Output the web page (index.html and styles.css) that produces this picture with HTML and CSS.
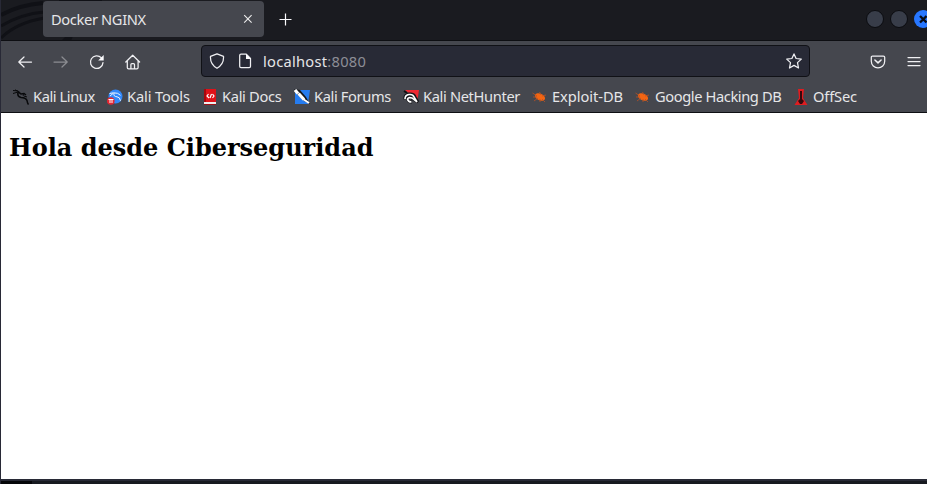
FILE: index.html
```html
<!DOCTYPE html>
<html lang="es">
<head>
<meta charset="utf-8">
<title>Docker NGINX</title>
<link rel="stylesheet" href="styles.css">
</head>
<body>
<div class="window">
  <header class="tabbar">
    <svg class="pattern" width="130" height="40" viewBox="0 0 130 40"><g fill="none" stroke="#101116" stroke-width="4"><path d="M0 15Q18 5 42 3"/><path d="M0 26Q20 14 43 12" stroke-width="3"/><path d="M0 38Q15 23 43 18" stroke-width="3"/><path d="M60 41l5-5h7l-2 5z" fill="#101116" stroke="none"/><path d="M58 0h43" stroke-width="2"/></g></svg>
    <div class="tab"><span>Docker NGINX</span><svg width="10" height="10" viewBox="0 0 10 10"><path d="M1.2 1.2l7.4 7.4M8.6 1.2L1.2 8.6" stroke="#eee" stroke-width="1.1"/></svg></div>
    <svg class="plus" width="13" height="13" viewBox="0 0 13 13"><path d="M6.5.5v12M.5 6.5h12" stroke="#fbfbfe" stroke-width="1.2"/></svg>
    <div class="controls"><i></i><i></i><i class="close"><svg width="18" height="18" viewBox="0 0 18 18"><path d="M6 6l6.500 6.500M12.500 6L6 12.500" stroke="#080d18" stroke-width="2.300"/></svg></i></div>
  </header>
  <nav class="toolbar">
    <div class="buttons">
      <svg width="16" height="16" viewBox="0 0 16 16"><path d="M14.500 8H2M7 3L1.800 8 7 13"/></svg>
      <svg class="dim" width="16" height="16" viewBox="0 0 16 16"><path d="M1 8h13M9 3l5.200 5L9 13"/></svg>
      <svg width="16" height="16" viewBox="0 0 16 16"><path d="M14 8.600A6.300 6.300 0 1 1 12.300 3.800"/><path d="M14.700 1v5.500H9.200z" fill="#fbfbfe" stroke="none"/></svg>
      <svg width="16" height="16" viewBox="0 0 16 16"><path d="M.8 8L7.700 1.200 14.600 8M2.300 6.800v6.700q0 1.300 1.300 1.300h8.200q1.300 0 1.300-1.300V6.800M5.900 14.500v-4q0-1 1-1h1.600q1 0 1 1v4"/></svg>
    </div>
    <div class="url">
      <svg width="16" height="16" viewBox="0 0 16 16"><path d="M8 .8l6.500 2.500q.6 7.800-6.500 12Q.9 11.100 1.500 3.300z"/></svg>
      <svg width="16" height="16" viewBox="0 0 16 16"><path d="M4 1.200h5.300L13.500 5.400v7.900q0 1.300-1.300 1.300H4q-1.300 0-1.300-1.300V2.500Q2.700 1.200 4 1.200z"/><path d="M9 1v5h5z" fill="#fbfbfe" stroke="none"/></svg>
      <span class="address">localhost<b>:8080</b></span>
      <svg class="star" width="16" height="16" viewBox="0 0 16 16"><path d="M8 .9l2.100 4.600 5.200.6-3.800 3.500 1 5.400L8 12.400 3.500 15l1-5.400L.7 6.100l5.200-.6z"/></svg>
    </div>
    <svg class="pocket" width="16" height="16" viewBox="0 0 16 16"><path d="M2.600 2h10.800q1.300 0 1.300 1.300v3.900a6.700 6.700 0 0 1-13.400 0V3.300Q1.300 2 2.600 2z"/><path d="M4.900 6L8 8.900 11.100 6" stroke-width="1.500"/></svg>
    <svg class="menu" width="14" height="12" viewBox="0 0 14 12"><path d="M1 1.500h12M1 5.500h12M1 9.500h12"/></svg>
  </nav>
  <nav class="bookmarks">
    <a class="w1"><svg width="16" height="16" viewBox="0 0 16 16"><g fill="none" stroke="#08090b" stroke-width="1"><path d="M0 1.500l5 .5 2.500 2M0 4.500l5-1.500M2 .8l3 1.500"/><path d="M5 3l3 2 3-.5 2 1.500M5 3.500Q4 7.500 8 8.500q5 .2 6 3 .2 2 1.500 4" stroke-width="1.500"/><path d="M11 4.500Q9 7 12 7.300l2 .7"/></g></svg><span>Kali Linux</span></a>
    <a class="w2"><svg width="16" height="16" viewBox="0 0 16 16"><circle cx="8.500" cy="7.500" r="7" fill="#3188fa"/><path d="M2.500 4.500l4-.7 4 .5 3 2M3 7l3-2.500M7 4q-1 3.500 3 3.800 3 .2 3.500 4" fill="none" stroke="#edf5ff" stroke-width="1"/><circle cx="3.800" cy="12" r="3.800" fill="#e32632"/><path d="M1.500 10.500h5M3 10.500V14m2-3.500V14" stroke="#fff"/></svg><span>Kali Tools</span></a>
    <a class="w3"><svg width="16" height="16" viewBox="0 0 16 16"><path d="M2 0h12v13H2z" fill="#df1219"/><path d="M2 0h2v13H2z" fill="#a9070d"/><path d="M2 13h12v2H2z" fill="#eee"/><path d="M2 15h12v1H2z" fill="#991117"/><path d="M6.500 5L5 7l2 2M10.500 5L12 7l-1.500 2M9.500 5L8 9" fill="none" stroke="#fff" stroke-width="1.200"/></svg><span>Kali Docs</span></a>
    <a class="w4"><svg width="16" height="16" viewBox="0 0 16 16"><path d="M1 1h15l-2 14H1z" fill="#257cf0"/><path d="M0 0l6 1 6 7 4 7-6-3-7-7z" fill="#15181d"/><path d="M1 1l3 3.500M4.500 4.500l5.500 6" stroke="#fff" stroke-width="3.200"/><path d="M9 10l6 4" stroke="#fff" stroke-width="2"/></svg><span>Kali Forums</span></a>
    <a class="w5"><svg width="16" height="16" viewBox="0 0 16 16"><path d="M2 1h14l-2 13L8 6z" fill="#ed2932"/><path d="M1 2l3 2" stroke="#111" stroke-width="2"/><path d="M2 10q-1-3.500 4-5 5-.5 6 3l3 5-5-3q-3-3-5 0-.5 3 4 3" stroke="#15161a" stroke-width="3" fill="#15161a"/><path d="M2 10q0-4 4-4.500 4-.5 5 2.500l3 5-5-4q-4-1-4.500 1 .5 3 4 3" stroke="#fff" stroke-width="1.600" fill="none"/></svg><span>Kali NetHunter</span></a>
    <a class="w6"><svg width="16" height="16" viewBox="0 0 16 16"><ellipse cx="8" cy="8" rx="5.400" ry="3.300" transform="rotate(25 8 8)" fill="#f36512"/><path d="M5 7L.5 4M5 8L1 8M6 9l-4 3M9 6L7.500 3M10 7l4-1M8 10v3M10 10l3 3" stroke="#b95024" stroke-width=".8"/></svg><span>Exploit-DB</span></a>
    <a class="w7"><svg width="16" height="16" viewBox="0 0 16 16"><ellipse cx="8" cy="8" rx="5.400" ry="3.300" transform="rotate(25 8 8)" fill="#f36512"/><path d="M5 7L.5 4M5 8L1 8M6 9l-4 3M9 6L7.500 3M10 7l4-1M8 10v3M10 10l3 3" stroke="#b95024" stroke-width=".8"/></svg><span>Google Hacking DB</span></a>
    <a class="w8"><svg width="16" height="16" viewBox="0 0 16 16"><path d="M5 0h6L10 9l4.500 7h-13L6 9z" fill="#df1c20"/><path d="M7 2h2v8l2 2-2 3H7l-2-3 2-2z" fill="#35080c"/></svg><span>OffSec</span></a>
  </nav>
  <main><h2>Hola desde Ciberseguridad</h2></main>
  <footer></footer>
</div>
</body>
</html>
```
FILE: styles.css
```css
* { box-sizing: border-box; }
body { margin: 0; overflow: hidden; background: #1a1b20; }
.window { height: 484px; border-left: 1px solid #282936; display: flex; flex-direction: column; font: 14.67px "Noto Sans", sans-serif; color: #e6e6e8; }
.tabbar { height: 41px; border-bottom: 1px solid #0d0e12; background: #1a1b20; display: flex; position: relative; padding-left: 42px; flex: none; }
.pattern { position: absolute; left: 0; top: 0; }
.tab { position: relative; width: 221px; height: 36px; margin-top: 1px; background: #45474e; border-radius: 4px; padding: 0 11px 0 8px; display: flex; justify-content: space-between; align-items: center; letter-spacing: -.36px; }
.plus { margin: 13px 0 0 15px; }
.controls { display: flex; gap: 6px; margin: 10px -5px 0 auto; }
.controls i { width: 18px; height: 18px; border-radius: 50%; background: #383d49; border: 1px solid #0b0c10; flex: none; }
.controls .close { background: #2777ff; border: 0; }
.close svg { display: block; }
.toolbar { height: 41px; background: #45474e; display: flex; align-items: center; flex: none; }
.toolbar svg { fill: none; stroke: #f0f0f3; stroke-width: 1.25; stroke-linejoin: round; stroke-linecap: round; flex: none; }
.toolbar .dim { stroke: #8c8d92; }
.buttons { display: flex; gap: 20px; margin-left: 16px; width: 184px; }
.url { width: 609px; height: 32px; background: #282a36; border: 1px solid #101116; border-radius: 4px; display: flex; align-items: center; padding: 0 7px; gap: 12px; margin-bottom: 1px; }
.address { margin-left: -2px; letter-spacing: .27px; padding-bottom: 1px; }
.address b { font-weight: 400; color: #8d8e96; }
.star { margin-left: auto; }
.pocket { margin-left: 60px; }
.menu { margin-left: 21px; }
.bookmarks { height: 31px; background: #45474e; border-bottom: 1px solid #0e0f13; display: flex; padding-left: 12px; flex: none; }
.bookmarks a { display: flex; align-items: center; gap: 4px; white-space: nowrap; flex: none; }
.bookmarks span { padding-bottom: 2px; }
.w1 { width: 94px; letter-spacing: -.42px; }
.w2 { width: 95px; letter-spacing: -.15px; }
.w3 { width: 92px; letter-spacing: -.33px; }
.w4 { width: 109px; letter-spacing: -.36px; }
.w5 { width: 129px; letter-spacing: -.35px; }
.w6 { width: 103px; letter-spacing: -.05px; }
.w7 { width: 158px; letter-spacing: -.4px; }
.w8 { letter-spacing: -.15px; }
main { flex: 1; background: #fff; color: #000; padding: 20px 8px; }
h2 { margin: 0; font: bold 24px/29px "DejaVu Serif", serif; }
footer { height: 5px; background: linear-gradient(90deg, #050609 31px, #171a20 31px); border-top: 2px solid #282a36; flex: none; }
```
